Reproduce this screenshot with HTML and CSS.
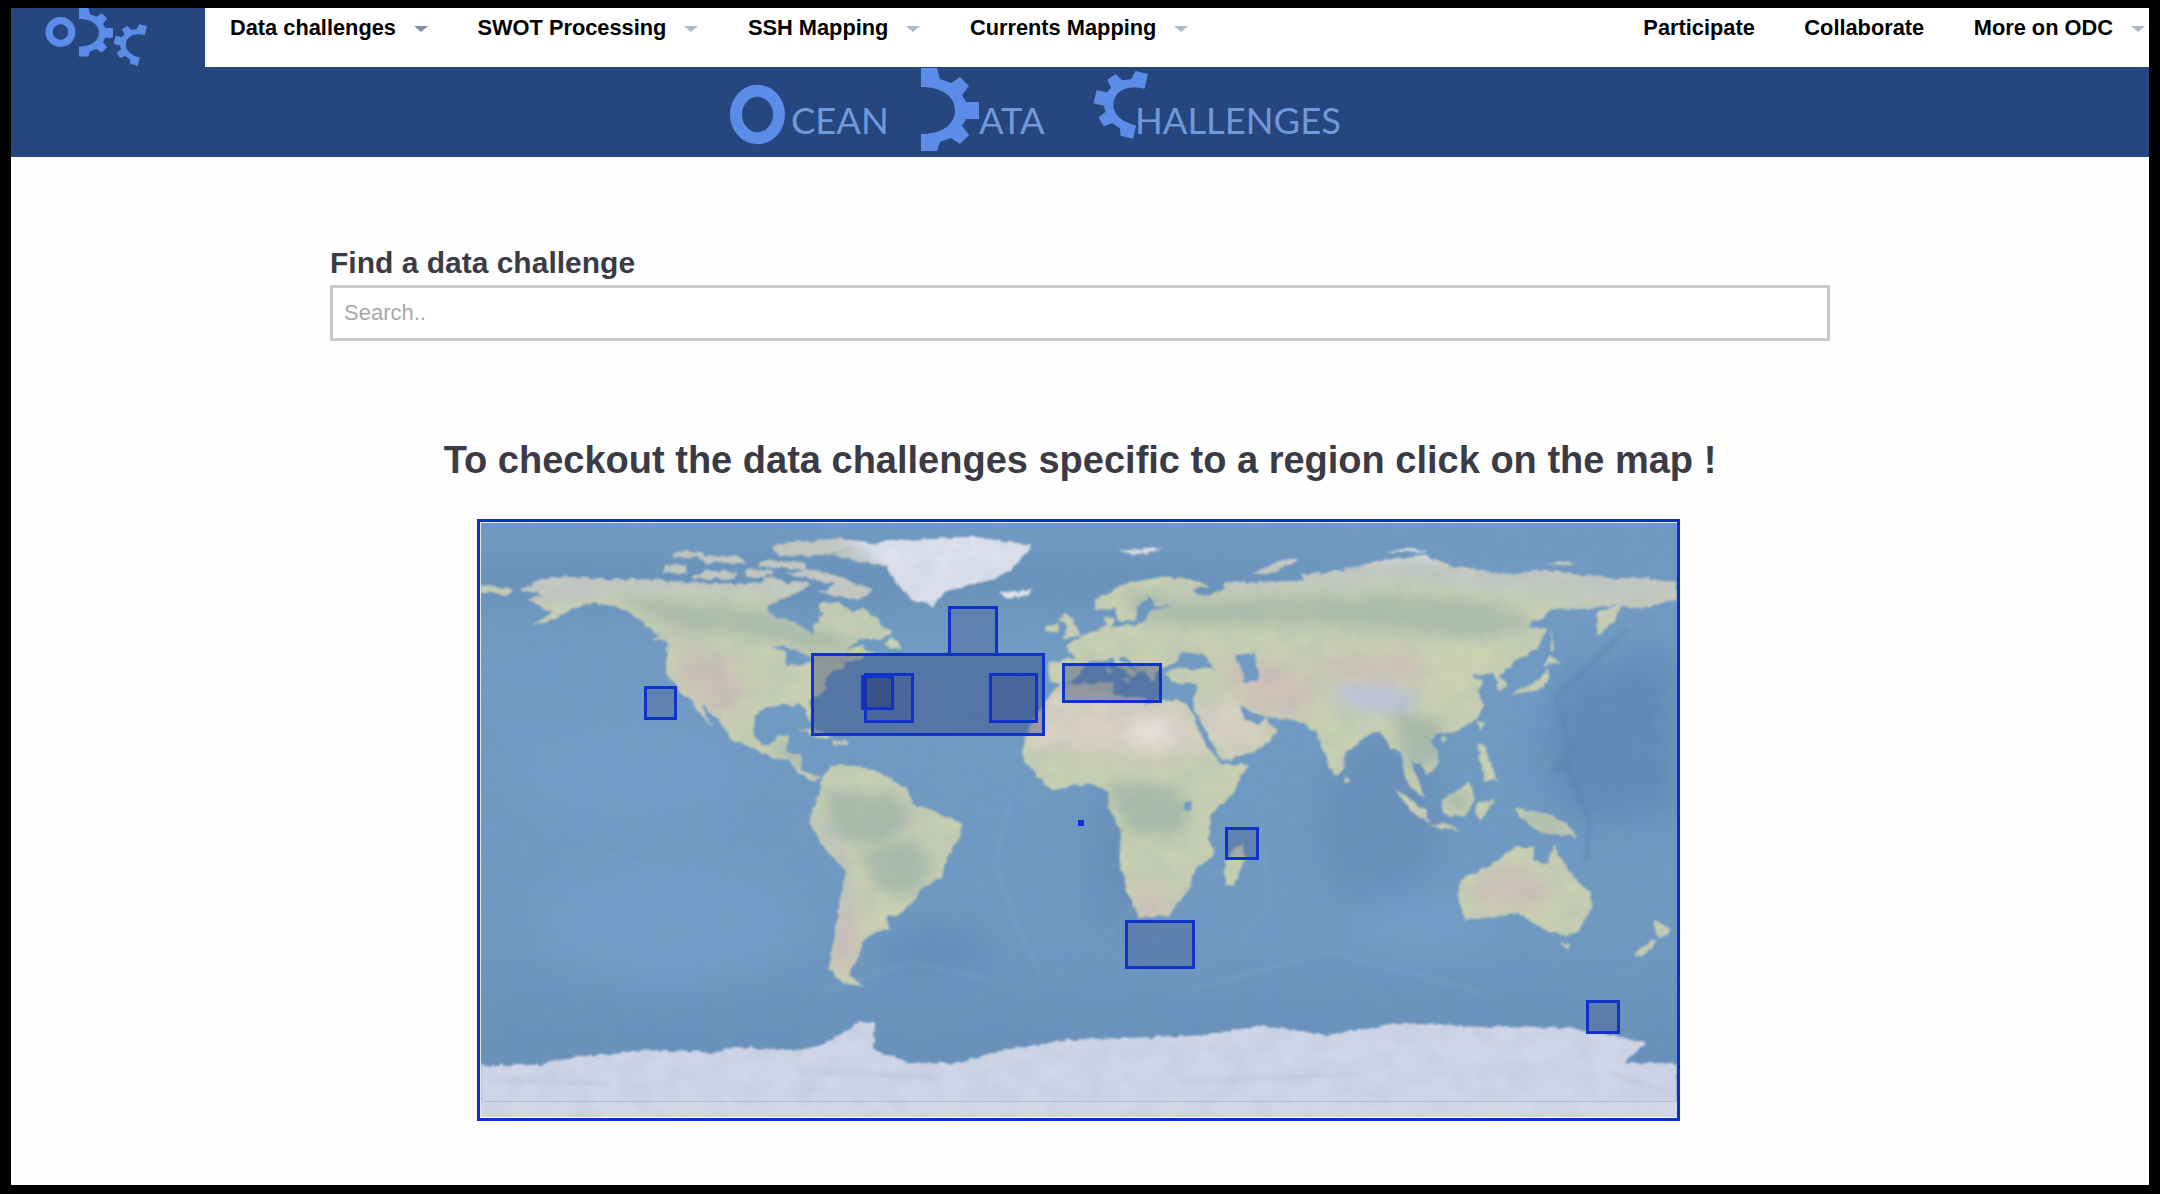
FILE: index.html
```html
<!DOCTYPE html>
<html lang="en">
<head>
<meta charset="utf-8">
<title>Ocean Data Challenges</title>
<link rel="stylesheet" href="styles.css">
</head>
<body>
<svg class="defs" width="0" height="0" aria-hidden="true">
  <defs>
    <path id="gear" d="M0,0 16,0 19,11 30,15 39,9 48,18 41,27 45,34 58,34 58,51 45,51 41,58 48,67 39,76 30,70 19,74 16,83 0,83 0,66 C22,66 34,56 34,42.5 C34,29 22,19 0,19 Z"/>
  </defs>
</svg>
<div class="page">
  <header>
    <div class="topbar">
      <a class="logo" href="#">
        <svg class="logo-svg" viewBox="0 0 194 58" width="194" height="58">
          <circle class="ring" cx="49.5" cy="24" r="11.4"/>
          <use class="mark" href="#gear" transform="translate(68,0) scale(.585)"/>
          <use class="mark" href="#gear" transform="translate(136,18) rotate(13) scale(-.49,.49)"/>
        </svg>
      </a>
      <nav class="menu">
        <a class="item" href="#">Data challenges<i class="caret caret-active"></i></a>
        <a class="item" href="#">SWOT Processing<i class="caret"></i></a>
        <a class="item" href="#">SSH Mapping<i class="caret"></i></a>
        <a class="item" href="#">Currents Mapping<i class="caret"></i></a>
      </nav>
      <nav class="menu menu-right">
        <a class="item" href="#">Participate</a>
        <a class="item" href="#">Collaborate</a>
        <a class="item item-last" href="#">More on ODC<i class="caret"></i></a>
      </nav>
    </div>
    <div class="banner">
      <svg class="banner-svg" viewBox="0 0 2138 90" width="2138" height="90">
        <ellipse class="ring-big" cx="746.5" cy="47.5" rx="21.5" ry="23.7"/>
        <text class="word" x="780" y="66.5">CEAN</text>
        <use class="mark" href="#gear" transform="translate(910,1)"/>
        <text class="word" x="968" y="66.5">ATA</text>
        <use class="mark" href="#gear" transform="translate(1137,7) rotate(13) scale(-.8,.8)"/>
        <text class="word" x="1124" y="66.5">HALLENGES</text>
      </svg>
    </div>
  </header>
  <main class="content">
    <section class="finder">
      <label class="finder-label" for="search">Find a data challenge</label>
      <input class="finder-input" id="search" type="text" placeholder="Search..">
    </section>
    <h2 class="map-title">To checkout the data challenges specific to a region click on the map !</h2>
    <div class="map">
      <svg class="map-svg" viewBox="0 0 1197 595" width="1197" height="595">
        <defs>
          <filter id="coast" filterUnits="userSpaceOnUse" x="0" y="0" width="1197" height="595">
            <feTurbulence type="fractalNoise" baseFrequency=".12" numOctaves="4" seed="4" result="n"/>
            <feDisplacementMap in="SourceGraphic" in2="n" scale="6" xChannelSelector="R" yChannelSelector="G"/>
            <feGaussianBlur stdDeviation=".8"/>
          </filter>
          <filter id="soft" filterUnits="userSpaceOnUse" x="0" y="0" width="1197" height="595">
            <feGaussianBlur stdDeviation="18"/>
          </filter>
          <filter id="softer" filterUnits="userSpaceOnUse" x="0" y="0" width="1197" height="595">
            <feGaussianBlur stdDeviation="2.2"/>
          </filter>
          <filter id="patch" filterUnits="objectBoundingBox" x="-.3" y="-.3" width="1.6" height="1.6">
            <feGaussianBlur stdDeviation="2"/>
          </filter>
          <filter id="grain" filterUnits="userSpaceOnUse" x="0" y="0" width="1197" height="595">
            <feTurbulence type="fractalNoise" baseFrequency=".035 .05" numOctaves="5" seed="9"/>
            <feColorMatrix type="matrix" values="0 0 0 0 .25  0 0 0 0 .35  0 0 0 0 .5  .9 0 0 0 -.32"/>
          </filter>
          <linearGradient id="sea" x1="0" y1="0" x2="0" y2="1">
            <stop offset="0" stop-color="#7199c1"/>
            <stop offset=".25" stop-color="#709bc4"/>
            <stop offset=".7" stop-color="#6f99c2"/>
            <stop offset=".88" stop-color="#6891bb"/>
            <stop offset="1" stop-color="#6891bb"/>
          </linearGradient>
          <path id="land" d="M-168,65 -165,66 -162,68 -156,69 -148,68.5 -141,68 -128,68 -115,67 -108,67 -95,67 -94,70 -88,67 -82,67.5 -81,66 -87,63 -94,60 -92,57 -85,55 -82,53 -80,51 -79,55 -77,57 -78,61 -72,61 -68,58 -65,59.5 -61,56 -56,52 -60,50 -66,50 -70,47 -65,48 -64,46 -61,46 -66,44 -70,43 -71,41 -74,40 -76,37 -76,35 -81,31 -80,26 -81,25 -82,28 -84,30 -89,30 -94,29 -97,27 -98,22 -95,18 -91,19 -90,21 -87,21 -88,16 -84,15 -83,10 -80,9 -77,8 -80,7 -84,9 -87,13 -92,14 -96,16 -105,20 -106,23 -110,27 -113,31 -112,27 -110,23 -112,25 -115,29 -117,32 -120,34 -122,37 -124,40 -124,47 -123,49 -128,52 -131,55 -135,58 -140,60 -146,61 -150,60 -154,58 -160,55 -165,54 -158,58 -162,60 -166,62 -161,63.5 Z
          M-80,71 -72,69 -62,65 -66,61.5 -72,63 -78,64 -73,66.5 -88,70 Z
          M-117,68.5 -105,68 -102,70 -112,71 Z M-125,70 -118,70 -118,72.5 -124,72.5 Z M-90,75 -75,75.5 -62,79 -72,80.5 -92,78.5 Z M-96,72 -82,71 -82,73 -96,74 Z M-112,73 -100,73 -102,75 -114,75 Z M-100,68.5 -92,68.5 -92,71 -100,71 Z M-122,75 -112,75 -114,76.5 -122,76 Z
          M-59,48 -53,47 -56,51 Z M-128,50 -124,49 -126,51 Z M-85,22 -80,23 -74,20 -78,20 -82,22 Z M-74,19 -69,19 -69,18 -74,18 Z
          M-75,76 -60,79.5 -32,81 -14,78.5 -20,71 -26,68 -40,64.5 -44,60 -50,62 -55,67 -58,72 -68,74 Z
          M-24,64 -14,65 -15,63 -22,62.5 Z
          M-77,8 -75,11 -72,12 -62,10.5 -52,5 -50,0 -44,-2 -35,-6 -35,-9 -39,-15 -41,-22 -48,-26 -49,-29 -54,-34 -58,-34 -57,-38 -62,-39 -65,-42 -66,-46 -69,-52 -65,-55 -71,-54 -75,-50 -74,-42 -73,-37 -70,-20 -76,-14 -81,-6 -80,-2 -78,3 Z
          M-6,36 10,37 11,33 20,32 20,30 25,32 32,31 34,28 37,20 43,12 51,12 47,4 40,-3 39,-10 41,-15 35,-20 33,-26 27,-34 18,-34 15,-27 12,-17 13,-8 9,-1 9,4 4,6 -4,5 -8,4 -13,9 -17,14 -16,20 -13,27 -10,31 Z
          M-9,37 -9,43 -1,44 -4,48 2,51 8,54 8,57 11,56 10,54 14,54 20,55 22,59 30,60 23,60 21,63 24,65 18,60 17,56 13,55 11,59 5,59 5,62 14,66.5 25,69 32,68.5 40,66 34,65 38,63 44,65 44,67 54,67.5 68,67.5 67,70 73,70 80,71 88,73 104,75.5 113,72 130,69.5 140,71 160,68.5 170,68.5 180,67 180,62 177,61.5 170,59.5 163,60 162,56 156,51 156,58 163,61 155,59 143,59 135,54 141,53 138,47 131,43 127,39 129,36 126,34 126,37 125,40 121,39 118,39 122,37 120,34 122,30 120,26 114,22 108,21 106,19 109,13 105,9 103,12 100,13 104,2 100,5 98,9 97,16 94,17 91,22 87,21 80,15 80,11 77,8 73,17 72,21 67,25 57,26 52,28 48,30 50,26 54,24 56,26 60,22 55,17 45,13 43,13 39,21 35,28 34,32 36,36 28,37 26,40 29,41 41,41 38,45 33,46 31,46 28,42 23,40 23,37 20,40 18,40 14,45 12,44 18,40 16,38 10,44 3,43 0,39 -2,37 -6,36 Z
          M-180,64 -172,63 -170,65 -180,67 Z
          M115,-23 123,-19 131,-13 137,-13 137,-17 141,-18 143,-12 147,-20 154,-27 154,-32 151,-38 147,-40 141,-39 137,-36 132,-33 125,-34 116,-35 114,-27 Z
          M145,-42 148,-42 147,-44 Z M173,-35 178,-38 175,-41 173,-37 Z M172,-41 174,-42 170,-46 167,-46 Z
          M130,33 135,34 140,35 142,39 141,41 139,38 133,35 Z M140,42 145,43 142,45 Z M142,54 143,47 142,46 Z
          M109,1 114,4 118,7 119,1 116,-4 110,-3 Z M95,5 104,-2 106,-6 101,-3 Z M105,-7 115,-8 110,-6 Z M120,1 125,1 121,-5 119,-3 Z M131,-1 141,-3 147,-6 150,-10 143,-9 138,-8 133,-4 Z
          M120,18 122,18 124,12 126,7 122,7 121,13 Z M120,25 122,25 121,22 Z M109,20 111,20 110,18 Z M80,9 82,7 80,6 Z
          M49,-12 50,-16 47,-25 44,-25 44,-17 Z
          M-5,50 1,51 -2,56 -4,58 -6,56 -3,54 Z M-10,52 -6,52 -6,55 -10,54 Z M12,38 15,38 15,37 Z M8,41 10,41 9,39 Z
          M12,76.5 25,78 20,75.5 Z M52,69.5 57,69.5 66,74 60,73.5 Z M92,76.5 105,76.5 100,77.5 Z M140,72.5 150,72.5 145,73.5 Z"/>
          <clipPath id="land-clip"><use href="#land"/></clipPath>
        </defs>

        <rect class="sea" width="1197" height="595"/>
        <g filter="url(#soft)">
          <path class="deep" d="M1085,150 1197,130 1197,290 1100,300 1060,240 Z"/>
          <ellipse class="deep" cx="455" cy="428" rx="58" ry="18"/>
          <ellipse class="deep-soft" cx="640" cy="340" rx="30" ry="80"/>
          <ellipse class="deep-soft" cx="900" cy="300" rx="60" ry="90"/>
          <ellipse class="deep-soft" cx="300" cy="60" rx="600" ry="20"/>
          <ellipse class="light" cx="190" cy="400" rx="130" ry="60"/>
          <ellipse class="light" cx="940" cy="400" rx="70" ry="30"/>
          <ellipse class="light" cx="150" cy="250" rx="110" ry="50"/>
        </g>
        <g class="ridges" filter="url(#softer)">
          <path d="M1147,108 1076,175 1092,228 1074,251"/>
          <path d="M1085,240 1110,300 1105,340"/>
          <path class="ridge-light" d="M530,280 515,340 535,400 560,450"/>
          <path class="ridge-light" d="M620,420 665,375 700,330 720,290"/>
          <path class="ridge-light" d="M780,300 790,380 760,420"/>
          <path class="ridge-light" d="M120,330 220,360 300,420"/>
          <path class="ridge-light" d="M340,470 430,440 520,460"/>
          <path class="ridge-light" d="M700,470 850,430 1000,470"/>
        </g>

        <g filter="url(#coast)">
          <g transform="matrix(3.325 0 0 -3.3 598.5 282)">
            <use class="land-base" href="#land"/>
            <g clip-path="url(#land-clip)">
              <g class="patches">
                <path class="p-boreal" d="M-140,64 -120,62 -95,59 -72,52 -66,48 -80,46 -95,50 -115,52 -125,54 -135,60 Z"/>
                <path class="p-tundra" d="M-170,72 -60,84 -60,60 -80,62 -100,63 -125,64 -145,63 -170,58 Z"/>
                <path class="p-boreal" d="M14,65 30,62 60,63 100,64 125,61 138,55 120,50 100,52 75,54 50,54 28,54 16,58 Z"/>
                <path class="p-tundra" d="M30,76 180,76 180,60 155,60 130,64 100,67 70,66 45,65 Z"/>
                <path class="p-ice" d="M-75,85 -12,85 -12,58 -50,58 -60,72 Z"/>
                <path class="p-ice" d="M5,82 110,82 110,74.5 5,74.5 Z"/>
                <path class="p-desert" d="M-18,30 -8,34 10,33 30,31 36,24 40,17 25,14 5,15 -15,17 Z"/>
                <path class="p-white" d="M15,26 28,26 30,18 15,18 Z"/>
                <path class="p-desert" d="M34,32 48,31 58,24 52,16 44,14 38,22 Z"/>
                <path class="p-pink" d="M42,42 60,42 72,37 68,27 55,27 48,33 Z"/>
                <path class="p-tibet" d="M76,37 92,37 102,33 100,28 88,27 78,31 Z"/>
                <path class="p-pink" d="M70,44 100,46 110,40 100,37 76,38 Z"/>
                <path class="p-green" d="M8,6 30,5 34,-4 28,-10 14,-8 Z"/>
                <path class="p-green" d="M-76,4 -54,3 -50,-6 -60,-13 -74,-10 Z"/>
                <path class="p-green" d="M95,28 110,25 108,12 98,10 Z"/>
                <path class="p-green" d="M-92,20 -84,16 -82,9 -90,14 Z"/>
                <path class="p-green" d="M-66,-15 -50,-10 -43,-20 -52,-28 -60,-26 Z"/>
                <path class="p-green" d="M110,3 118,3 116,-3 111,-2 Z"/>
                <path class="p-green" d="M132,-3 146,-5 146,-9 136,-7 Z"/>
                <path class="p-pink" d="M-118,46 -104,44 -100,34 -108,26 -116,32 -122,40 Z"/>
                <path class="p-pink" d="M120,-20 136,-20 142,-28 134,-32 120,-30 Z"/>
                <path class="p-pink" d="M-72,-30 -66,-36 -68,-52 -74,-52 -74,-38 Z"/>
                <path class="p-pink" d="M16,-25 26,-26 26,-34 19,-34 Z"/>
                <path class="p-andes" d="M-78,-4 -72,-16 -69,-28 -71,-42"/>
                <path class="p-rock" d="M-125,58 -114,48 -108,38 -104,30"/>
                <path class="p-pale" d="M-66,-39 -60,-30 -56,-32 -64,-42 Z"/>
                <path class="p-pale" d="M100,42 122,48 126,42 118,36 108,34 Z"/>
              </g>
            </g>
            <path class="inland" d="M47,45 53,46 54,40 54,37 50,37 49,41 Z"/>
            <path class="inland" d="M-92,48 -85,47 -80,44 -83,42 -88,42 -88,46 Z"/>
            <path class="inland" d="M32,1 34,1 34,-2 32,-2 Z"/>
          </g>
          <path class="ice" d="M0,543 55,543 97,535 174,528 235,531 254,525 323,528 353,518 380,500 395,501 394,528 430,541 480,541 514,530 590,517 649,516 728,513 780,503 847,513 922,501 1001,505 1084,506 1120,510 1167,521 1144,541 1197,541 1197,595 0,595 Z"/>
        </g>
        <g filter="url(#softer)">
          <path class="ice-shade" d="M10,558 130,562 M320,548 460,556 M700,560 880,552 M1130,550 1190,572"/>
        </g>
        <rect class="ice-strip" x="0" y="580" width="1197" height="15"/>
        <rect class="ice-line" x="4" y="579" width="1193" height="1"/>
        <rect class="grain" width="1197" height="595" filter="url(#grain)"/>
        <path class="edge" d="M.5,595 V.5 H1197"/>

        <rect class="region region-deep" x="332.5" y="132.5" width="231" height="80"/>
        <rect class="region" x="469.5" y="85.5" width="47" height="47"/>
        <rect class="region" x="165.5" y="165.5" width="30" height="31"/>
        <rect class="region" x="385.5" y="152.5" width="47" height="47"/>
        <rect class="region region-deep" x="382.5" y="154.5" width="30" height="32"/>
        <rect class="region" x="510.5" y="152.5" width="46" height="47"/>
        <rect class="region region-deep" x="583.5" y="142.5" width="97" height="37"/>
        <rect class="region" x="746.5" y="306.5" width="31" height="30"/>
        <rect class="region" x="646.5" y="399.5" width="67" height="46"/>
        <rect class="region" x="1107.5" y="479.5" width="31" height="31"/>
        <rect class="region-dot" x="598" y="298" width="6" height="6"/>
      </svg>
    </div>
  </main>
</div>
</body>
</html>
```
FILE: styles.css
```css
* { box-sizing: border-box; }
html, body { margin: 0; height: 100%; }
body {
  background: #000;
  padding: 8px 11px 9px;
  font-family: "Liberation Sans", Arial, sans-serif;
  overflow: hidden;
}
.defs { position: absolute; }
.page { background: #fefefe; height: 100%; overflow: hidden; }

.topbar { display: flex; height: 59px; background: #fff; }
.logo { display: block; width: 194px; height: 59px; background: #26467f; flex: none; }
.logo-svg, .banner-svg, .map-svg { display: block; }
.ring { fill: none; stroke: #5b8de8; stroke-width: 7.2; }
.mark { fill: #5b8de8; }
.menu { display: flex; padding-top: 8px; }
.menu-right { margin-left: auto; }
.item {
  display: flex;
  align-items: center;
  height: 24px;
  padding: 0 25px 0 24.5px;
  color: #000;
  font-size: 21.8px;
  font-weight: 700;
  line-height: 24px;
  text-decoration: none;
  white-space: nowrap;
}
.menu > .item:first-child { padding-left: 25px; }
.menu-right .item-last { padding-right: 4px; }
.caret {
  width: 0;
  height: 0;
  margin-left: 18px;
  margin-top: 2px;
  border-top: 6px solid #b1b9cf;
  border-left: 7px solid transparent;
  border-right: 7px solid transparent;
}
.caret-active { border-top-color: #7e8fb2; }

.banner { height: 90px; background: #26467f; overflow: hidden; }
.ring-big { fill: none; stroke: #5b8de8; stroke-width: 12; }
.word { fill: #7099da; font-family: Lato, "Open Sans", sans-serif; font-size: 36.4px; font-weight: 400; }

.content { display: flex; flex-direction: column; align-items: center; }
.finder { width: 1500px; margin-top: 90px; }
.finder-label {
  display: block;
  color: #3b3b46;
  font-size: 30px;
  font-weight: 700;
  line-height: 32px;
  margin-bottom: 6px;
}
.finder-input {
  display: block;
  width: 100%;
  height: 56px;
  padding: 0 11px;
  border: 3px solid #cbcbcb;
  background: #fff;
  font-family: inherit;
  font-size: 22px;
  color: #333;
  outline: none;
}
.finder-input::placeholder { color: #a8a8a8; opacity: 1; }
.map-title {
  margin: 97px 0 0;
  color: #3b3b46;
  font-size: 38px;
  font-weight: 700;
  line-height: 44px;
  text-align: center;
}
.map {
  width: 1203px;
  height: 602px;
  margin: 37px 3px 0 0;
  border: 3px solid #0e2fcb;
}

/* world map */
.sea { fill: url(#sea); }
.deep { fill: #6089b5; }
.deep-soft { fill: #6890ba; }
.light { fill: #739ec8; }
.ridges path { fill: none; stroke: #557ca8; stroke-width: 2.5; opacity: .6; }
.ridges .ridge-light { stroke: #7ca5cd; stroke-width: 4; opacity: .35; }
.land-base { fill: #c8cfb2; }
.patches path { filter: url(#patch); stroke: none; }
.p-boreal { fill: #afbfac; }
.p-tundra { fill: #c4c8c2; }
.p-ice { fill: #dde1ee; }
.p-desert { fill: #d8d0c2; }
.p-white { fill: #e2dfd8; }
.p-pink { fill: #cfc2b8; }
.p-tibet { fill: #bfc4d6; }
.p-green { fill: #a8bbaa; }
.p-pale { fill: #cfd3b2; }
.patches .p-andes { fill: none; stroke: #bdb8c6; stroke-width: 2; }
.patches .p-rock { fill: none; stroke: #bdb9b4; stroke-width: 2; }
.inland { fill: #6f9bc6; }
.ice { fill: #d0d6e7; }
.ice-shade { fill: none; stroke: #bcc2d4; stroke-width: 3; opacity: .7; }
.ice-strip { fill: #d3d8e9; }
.ice-line { fill: #babfd0; }
.grain { fill: #000; opacity: .3; }
.edge { fill: none; stroke: #e6ecf4; stroke-width: 1; }
.region { fill: rgba(28, 42, 105, .2); stroke: #0f32c8; stroke-width: 3; }
.region-deep { fill: rgba(28, 42, 105, .33); }
.region-dot { fill: #0f32d8; }
```
